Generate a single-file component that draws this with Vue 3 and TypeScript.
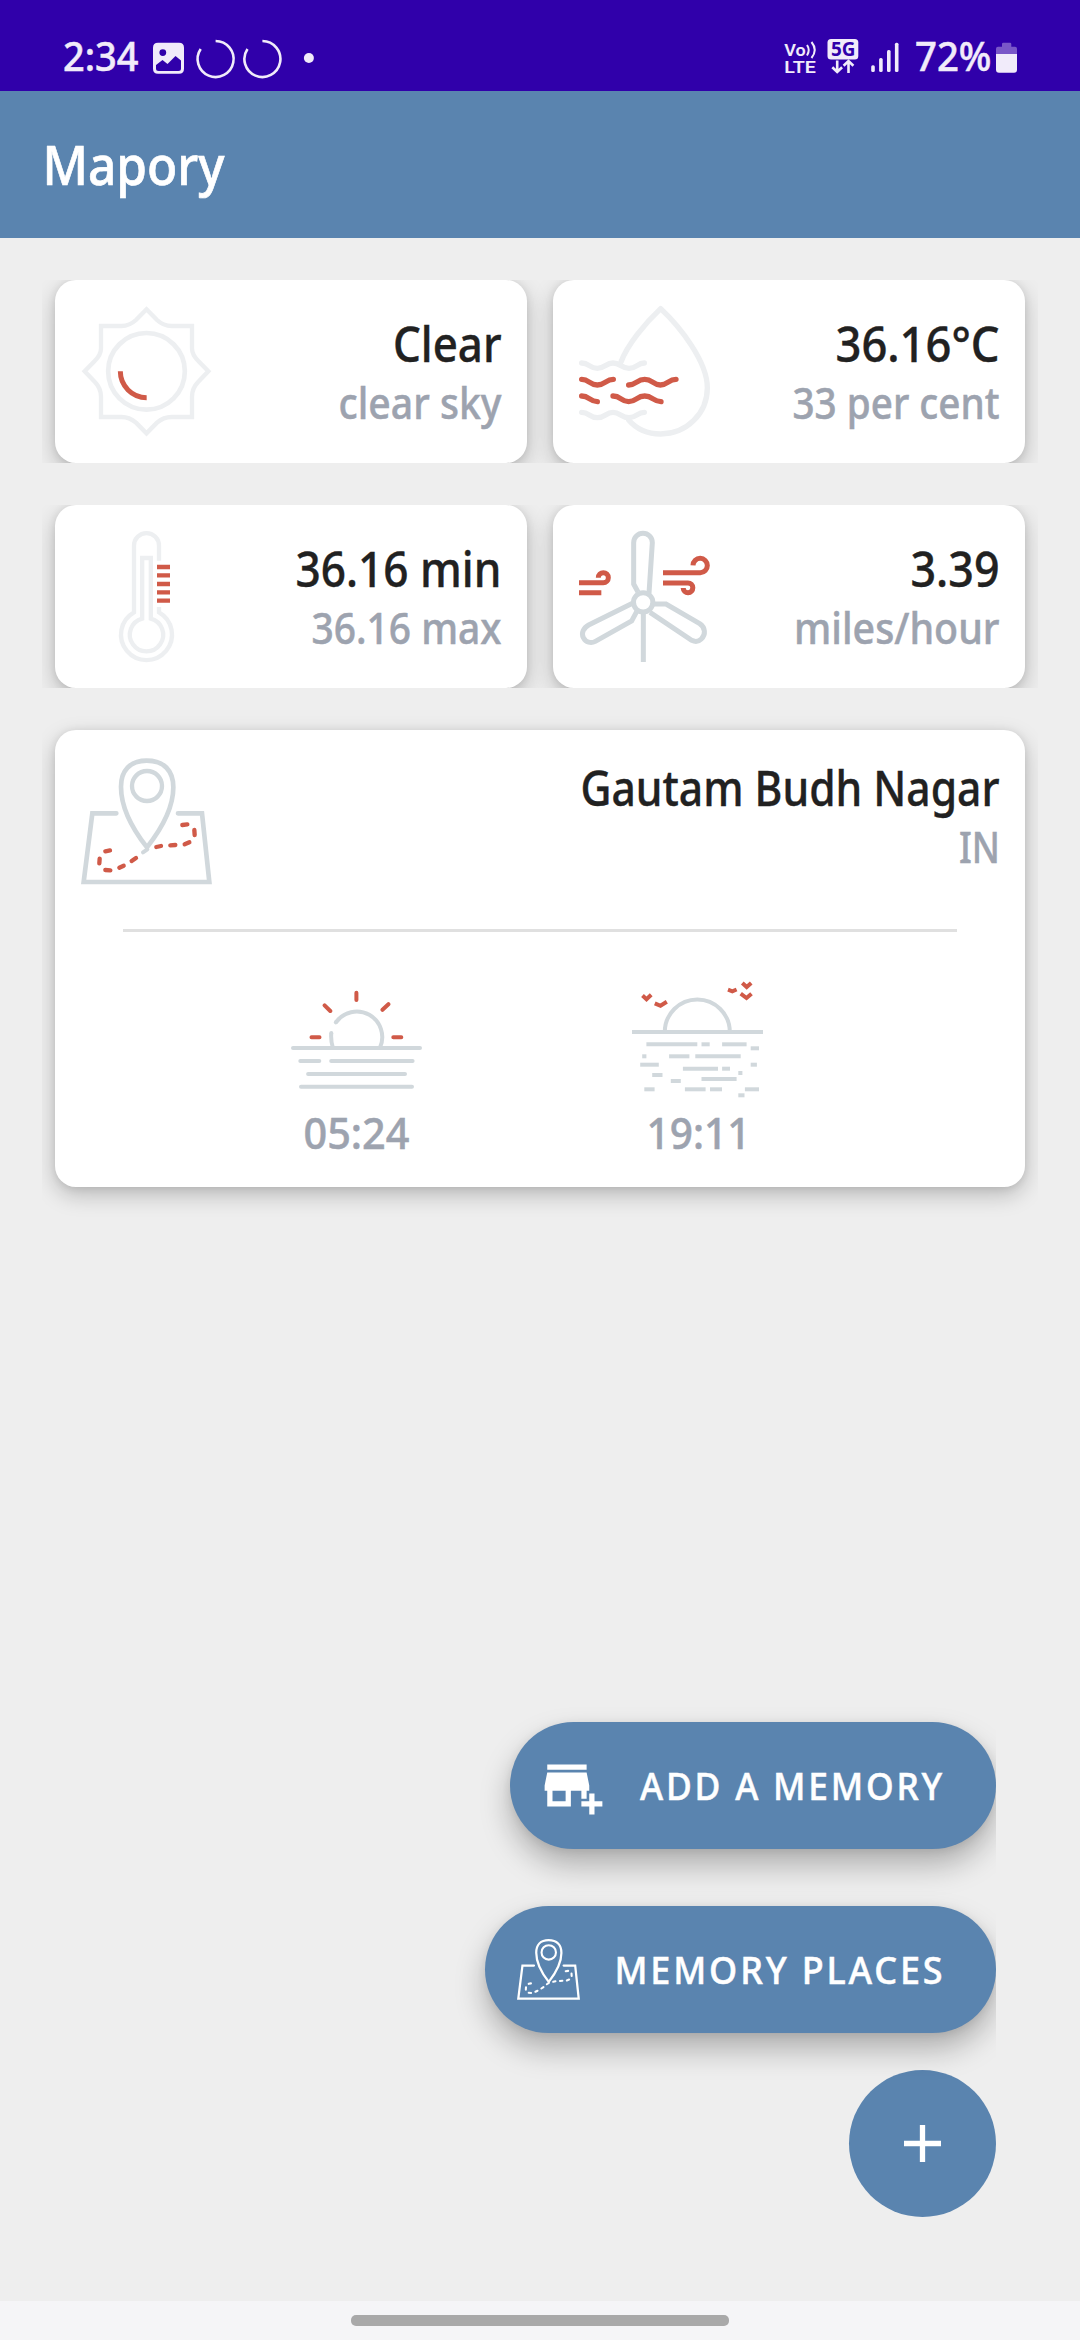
<script setup lang="ts">
interface Label {
  text: string
  width: number
}

interface WeatherCard {
  icon: 'sun' | 'drop' | 'thermometer' | 'wind'
  title: Label
  sub: Label
}

const rows: WeatherCard[][] = [
  [
    { icon: 'sun', title: { text: 'Clear', width: 108.5 }, sub: { text: 'clear sky', width: 163 } },
    { icon: 'drop', title: { text: '36.16°C', width: 164 }, sub: { text: '33 per cent', width: 207 } },
  ],
  [
    { icon: 'thermometer', title: { text: '36.16 min', width: 206 }, sub: { text: '36.16 max', width: 190 } },
    { icon: 'wind', title: { text: '3.39', width: 89 }, sub: { text: 'miles/hour', width: 205.5 } },
  ],
]

const signalBars = [
  { x: 2, top: 25.3 },
  { x: 9.9, top: 18 },
  { x: 17.8, top: 10 },
  { x: 25.7, top: 2.7 },
]

// Water reflections below the sunset horizon: start, end, y
const ripples: [number, number, number][] = [
  [646.4, 697.3, 1044.3], [701.5, 709.7, 1044.3], [722.1, 746.6, 1044.3], [750.7, 759, 1048.3],
  [642.2, 646.4, 1056.3], [669.1, 689.4, 1056.3], [695.3, 740.7, 1056.3],
  [640.2, 658.8, 1064.7], [750.7, 756.9, 1064.7],
  [682.9, 718, 1068.7], [722.1, 730, 1068.7], [738.3, 742.4, 1073],
  [652.2, 662.5, 1075], [701.5, 736.6, 1079], [670.8, 680.8, 1081],
  [644.3, 654.6, 1089.3], [684.9, 705.6, 1089.3], [710, 722, 1089.3], [744.9, 759, 1089.3],
  [738.3, 744.5, 1095.3],
]
</script>

<template>
  <div class="screen">
    <svg class="defs" width="0" height="0" aria-hidden="true">
      <symbol id="map-pin" viewBox="153 138 393 393">
        <g fill="none" stroke="currentColor" stroke-width="14" stroke-linecap="round">
          <path d="M259 310H187L161 516H538L516 310H444" />
          <path d="M351 412C310 360 273 295 273 230C273 182 300 152 350 152C402 152 430 182 430 232C430 295 392 360 351 412Z" />
          <circle cx="351" cy="228" r="45" stroke-width="13" />
          <path d="M352 418L339 427" stroke-width="12" />
        </g>
        <path
          class="route"
          d="M226 424L240 421M209 446L208 460M226 480L241 481M268 473L281 467M305 453L318 444M379 411L393 408M421 406L436 405M464 403L478 397M493 360L494 375M457 345L472 343"
        />
      </symbol>
    </svg>

    <header class="status">
      <svg class="clock" width="80" height="40">
        <text x="0" y="31" textLength="75.5" lengthAdjust="spacingAndGlyphs">2:34</text>
      </svg>
      <svg class="notifications" width="170" height="40" viewBox="150 40 170 40">
        <path fill-rule="evenodd" d="M158 42.7H179Q184 42.7 184 47.7V68.7Q184 73.7 179 73.7H158Q153 73.7 153 68.7V47.7Q153 42.7 158 42.7ZM156 65V68.5Q156 71 158.5 71H178.5Q181 71 181 68.5V60.5L175.5 56L167.5 64L162.5 60ZM162.8 49.2A3.4 3.4 0 1 0 162.8 56A3.4 3.4 0 1 0 162.8 49.2Z" />
        <g class="ring">
          <path d="M215.6 41A18 18 0 1 1 200.7 48.9" />
          <path d="M262.4 41A18 18 0 1 1 247.5 48.9" />
        </g>
        <circle cx="308.9" cy="58" r="5" />
      </svg>
      <span class="spacer"></span>
      <svg class="network" width="76" height="40" viewBox="784 38 76 40">
        <text class="tiny" x="784.3" y="55.5" textLength="21.5" lengthAdjust="spacingAndGlyphs">Vo</text>
        <text class="tiny" x="784.3" y="72.9" textLength="31.5" lengthAdjust="spacingAndGlyphs">LTE</text>
        <g fill="none" stroke="#f1ebfa" stroke-width="2">
          <path d="M807 45Q810.5 50 807 55.5M811.5 42Q818 50 811.5 58" />
        </g>
        <rect x="827.5" y="39" width="30.8" height="20.5" rx="3.5" />
        <text class="badge" x="831" y="55.8" textLength="24.5" lengthAdjust="spacingAndGlyphs">5G</text>
        <path fill="none" stroke="#f1ebfa" stroke-width="2.6" d="M837.2 60.5V71.5M832.3 67.3L837.2 72L842.1 67.3M848.5 73V62M843.6 65.7L848.5 61L853.4 65.7" />
      </svg>
      <svg class="signal" width="30" height="40" viewBox="0 0 30 40">
        <rect v-for="bar in signalBars" :key="bar.x" :x="bar.x - 1.8" :y="bar.top" width="3.6" :height="32 - bar.top" rx="1.5" />
      </svg>
      <svg class="percent" width="78" height="40">
        <text x="0" y="31" textLength="76.5" lengthAdjust="spacingAndGlyphs">72%</text>
      </svg>
      <svg class="battery" width="21" height="40" viewBox="996 40 21 40">
        <path fill="#7a57c8" d="M1002 46.7V44Q1002 42.7 1003.3 42.7H1010Q1011.3 42.7 1011.3 44V46.7H1015Q1017 46.7 1017 48.7V54H996V48.7Q996 46.7 998 46.7Z" />
        <path d="M996 54H1017V69.7Q1017 72.7 1014 72.7H999Q996 72.7 996 69.7Z" />
      </svg>
    </header>

    <div class="appbar">
      <svg width="200" height="80">
        <text x="0.5" y="60" textLength="182" lengthAdjust="spacingAndGlyphs">Mapory</text>
      </svg>
    </div>

    <main class="content">
      <section v-for="(row, index) in rows" :key="index" class="row">
        <article v-for="card in row" :key="card.icon" class="card">
          <svg v-if="card.icon === 'sun'" class="icon faint" viewBox="153 138 393 393">
            <path stroke-width="13" d="M349.5 148L381 180Q400 198 425 198H486V265Q486 285 505 303L535 334L505 365Q486 384 486 410V471H425Q400 471 381 488L349.5 520L318 488Q298 471 275 471H213V410Q213 384 194 365L164 334L194 303Q213 285 213 265V198H275Q298 198 318 180Z" />
            <circle cx="349.5" cy="334" r="115" stroke-width="14" />
            <path class="red" stroke-width="15" d="M271 334A79 79 0 0 0 350 413" />
          </svg>
          <svg v-else-if="card.icon === 'drop'" class="icon faint" viewBox="117 138 393 393" stroke-width="16" stroke-linecap="round" stroke-linejoin="round">
            <path d="M243 306C262 255 315 190 362 146C420 200 502 305 502 383C502 460 440 522 362 522C325 522 290 508 266 480" />
            <path d="M125 309C148 309 148 325 172 325S197 309 219 309S243 325 267 325S291 309 313 309M125 457C148 457 148 473 172 473S197 457 219 457S243 473 267 473S291 457 313 457" />
            <path class="red" d="M125 358C148 358 148 375 172 375S197 358 220 358M266 375C290 375 290 358 314 358S338 375 361 375S385 358 408 358M125 408C148 408 150 425 172 425M219 408C243 408 243 425 266 425S290 408 314 408S340 425 363 425" />
          </svg>
          <svg v-else-if="card.icon === 'thermometer'" class="icon faint" viewBox="153 123 393 393" stroke-width="13">
            <path d="M387 212V167A37.5 37.5 0 0 0 312 167V367A76.5 76.5 0 1 0 387 367V351" />
            <path d="M336.5 386V204H362.5V386A50 50 0 1 1 336.5 386Z" />
            <path class="red" d="M381 231H420M381 256H420M381 282H420M381 307H420M381 332H420" />
          </svg>
          <svg v-else class="icon" viewBox="117 123 393 393" stroke-width="15">
            <path d="M294 306L281 282V158A28 28 0 0 1 337 158L327 310M338 342H378L479 401C496 412 498 434 484 447C476 455 465 456 455 451L330 367M279 339L146 405C130 414 123 430 130 443C137 457 153 461 166 454L275 393L290 365M310 366V516" />
            <circle cx="309.5" cy="337" r="29" />
            <path class="red" d="M369 248H481A21.5 21.5 0 1 0 459 226M369 279H444A14.5 14.5 0 1 1 429.5 294M117 278H190A15 15 0 1 0 175 263M117 308H184" />
          </svg>
          <div class="labels">
            <svg class="title" width="260" height="54">
              <text x="260.5" y="46" text-anchor="end" :textLength="card.title.width" lengthAdjust="spacingAndGlyphs">{{ card.title.text }}</text>
            </svg>
            <svg class="sub" width="260" height="54">
              <text x="260.5" y="44" text-anchor="end" :textLength="card.sub.width" lengthAdjust="spacingAndGlyphs">{{ card.sub.text }}</text>
            </svg>
          </div>
        </article>
      </section>

      <section class="place">
        <div class="place-head">
          <svg class="icon"><use href="#map-pin" /></svg>
          <div class="labels">
            <svg class="title" width="440" height="54">
              <text x="440.5" y="46" text-anchor="end" textLength="419" lengthAdjust="spacingAndGlyphs">Gautam Budh Nagar</text>
            </svg>
            <svg class="sub" width="440" height="54">
              <text x="441" y="44" text-anchor="end" textLength="41" lengthAdjust="spacingAndGlyphs">IN</text>
            </svg>
          </div>
        </div>
        <div class="divider"></div>
        <div class="times">
          <div class="time">
            <svg class="icon" viewBox="291 974 131 131" stroke-width="4" stroke-linecap="round">
              <path d="M293 1048H420M300.3 1061H319.3M331.2 1061H412.6M308.1 1074H405M301 1086.7H412" />
              <path stroke-linecap="butt" d="M380 1047.5A25.5 25.5 0 0 0 335.8 1022.5M331.3 1033Q330.6 1040 332.8 1047.5" />
              <path d="M335.8 1022.4L336 1022.2M331.3 1033V1033.2" />
              <path class="red" d="M356.4 992.7V1000M324.6 1005.3L330.3 1011M388.4 1004.2L382.5 1009.8M311.5 1037.3H319.5M393.3 1037.3H401.3" />
            </svg>
            <svg class="sub" width="131" height="54">
              <text x="65.5" y="44" text-anchor="middle" textLength="106" lengthAdjust="spacingAndGlyphs">05:24</text>
            </svg>
          </div>
          <div class="time">
            <svg class="icon" viewBox="632 974 131 131" stroke-width="4">
              <path d="M632 1032H763M664.8 1032A32.5 32.5 0 0 1 729.8 1032" />
              <path v-for="([from, to, y], i) in ripples" :key="i" :d="`M${from} ${y}H${to}`" />
              <path class="red" d="M642.5 995.5L646.5 999.2L651.2 994.7M654.8 1003.3L660.5 1005.8L666.8 1001.8M728 989.7L732.3 991.3L736.6 989.5M742.3 983L746.7 987L751.2 983M740.7 993.7L746.5 998L751.5 993.7" />
            </svg>
            <svg class="sub" width="131" height="54">
              <text x="66.5" y="44" text-anchor="middle" textLength="104" lengthAdjust="spacingAndGlyphs">19:11</text>
            </svg>
          </div>
        </div>
      </section>
    </main>

    <nav class="actions">
      <button class="pill">
        <svg class="glyph" viewBox="0 0 24 24" fill="#fff">
          <path d="M15 17h2v-3h1v-2l-1-5H2l-1 5v2h1v6h9v-6h4V17zM9 18H4v-4h5V18zM2 4h15v2H2zM20 18v-3h-2v3h-3v2h3v3h2v-3h3v-2h-3z" />
        </svg>
        <svg class="caption" width="304" height="50">
          <text x="1" y="38.5" textLength="305" lengthAdjust="spacingAndGlyphs">ADD A MEMORY</text>
        </svg>
      </button>
      <button class="pill places">
        <svg class="glyph white"><use href="#map-pin" /></svg>
        <svg class="caption" width="331" height="50">
          <text x="0.5" y="38.5" textLength="331" lengthAdjust="spacingAndGlyphs">MEMORY PLACES</text>
        </svg>
      </button>
      <button class="fab" aria-label="Close menu">
        <svg width="37" height="37" viewBox="0 0 37 37">
          <path stroke="#fff" stroke-width="5.3" d="M0 18.5H37M18.5 0V37" />
        </svg>
      </button>
    </nav>

    <footer class="gesture"><span></span></footer>
  </div>
</template>

<style>
body {
  margin: 0;
}
</style>

<style scoped>
.screen {
  display: flex;
  flex-direction: column;
  width: 1080px;
  height: 2340px;
  overflow: hidden;
  background: #eee;
  font-family: "Noto Sans", "Open Sans", sans-serif;
  font-weight: 500;
}

svg {
  display: block;
  flex: none;
  overflow: visible;
}

.defs {
  position: absolute;
}

.status {
  display: flex;
  box-sizing: border-box;
  height: 91px;
  padding: 40px 63px 0 63px;
  background: #3000aa;
  fill: #f1ebfa;
}

.clock text,
.percent text {
  font-size: 40.5px;
  stroke: #f1ebfa;
  stroke-width: 0.5px;
}

.notifications {
  margin-left: 7px;
}

.ring {
  fill: none;
  stroke: #f1ebfa;
  stroke-width: 2.6;
}

.spacer {
  flex: 1;
}

.network {
  margin: -2px 11px 0 0;
}

.tiny {
  font-family: Roboto, "Liberation Sans", sans-serif;
  font-size: 17px;
  font-weight: 600;
}

.badge {
  fill: #3000aa;
  font-size: 19px;
  font-weight: 700;
}

.signal {
  margin-right: 14px;
}

.percent {
  margin-right: 3px;
}

.appbar {
  box-sizing: border-box;
  height: 147px;
  padding: 34px 42px;
  background: #5a84af;
  fill: #fff;
  font-size: 55px;
}

.appbar text {
  stroke: #fff;
  stroke-width: 0.7px;
}

.content {
  display: flex;
  flex-direction: column;
  gap: 42px;
  padding: 42px;
}

.row {
  display: flex;
  gap: 26px;
  height: 183px;
  padding: 0 13px;
  overflow: hidden;
}

.card,
.place {
  box-sizing: border-box;
  border-radius: 21px;
  background: #fff;
  box-shadow: 0 8px 22px rgba(0, 0, 0, 0.22), 0 1px 8px rgba(0, 0, 0, 0.09);
}

.card {
  display: flex;
  flex: 1;
  justify-content: space-between;
  padding: 26px;
}

.icon {
  width: 131px;
  height: 131px;
  fill: none;
  stroke: #d1d8dc;
  color: #d1d8dc;
}

.faint {
  stroke: #edeff1;
}

.red {
  stroke: #d05a48;
}

.route {
  fill: none;
  stroke: var(--route, #d05a48);
  stroke-width: 13;
  stroke-linecap: round;
}

.labels {
  display: flex;
  flex-direction: column;
  gap: 5px;
  padding-top: 10px;
}

.title {
  fill: #212121;
  font-size: 48.5px;
  stroke: #212121;
  stroke-width: 0.4px;
}

.sub {
  fill: #9da3af;
  font-size: 43px;
  stroke: #9da3af;
  stroke-width: 0.5px;
}

.place {
  height: 457px;
  margin: 0 13px;
  padding-top: 26px;
  clip-path: inset(-60px -13px -60px -13px);
}

.place-head {
  display: flex;
  justify-content: space-between;
  height: 173px;
  padding: 0 26px;
}

.place-head .labels {
  padding-top: 4px;
}

.place-head .icon,
.glyph {
  stroke: none;
}

.divider {
  height: 3px;
  margin: 0 68px;
  background: #e0e0e0;
}

.times {
  display: flex;
  gap: 210px;
  padding: 42px 0 0 236px;
}

.actions {
  display: flex;
  flex: 1;
  flex-direction: column;
  align-items: flex-end;
  justify-content: flex-end;
  padding: 0 84px 84px 0;
}

button {
  border: 0;
  padding: 0;
  background: #5a84af;
  font: inherit;
}

.pill {
  display: flex;
  align-items: center;
  gap: 34px;
  box-sizing: border-box;
  width: 486px;
  height: 127px;
  margin-bottom: 57px;
  padding-left: 32px;
  border-radius: 64px;
  box-shadow: 0 16px 30px rgba(0, 0, 0, 0.27), 0 2px 10px rgba(0, 0, 0, 0.08);
  clip-path: inset(-70px 0 -70px -70px);
}

.places {
  width: 511px;
  margin-bottom: 37px;
}

.glyph {
  width: 63px;
  height: 63px;
}

.white {
  --route: #fff;
  color: #fff;
}

.caption {
  fill: #fff;
  font-size: 38px;
  letter-spacing: 3px;
  stroke: #fff;
  stroke-width: 0.5px;
}

.fab {
  display: flex;
  align-items: center;
  justify-content: center;
  width: 147px;
  height: 147px;
  border-radius: 50%;
}

.gesture {
  display: flex;
  justify-content: center;
  height: 39px;
  background: #f5f5f7;
}

.gesture span {
  width: 378px;
  height: 11px;
  margin-top: 14px;
  border-radius: 5px;
  background: #a9a9a9;
}
</style>
